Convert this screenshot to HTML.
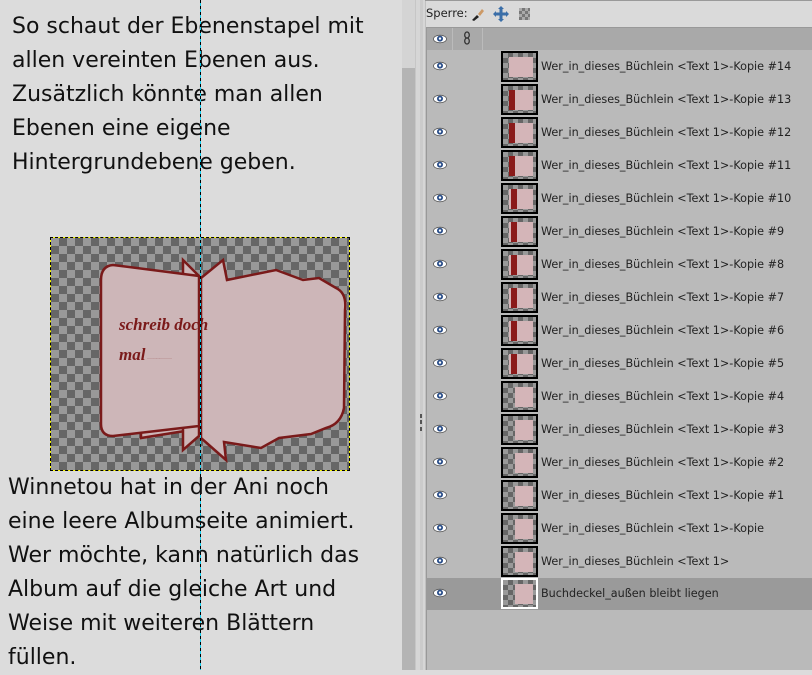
<!DOCTYPE html>
<html><head><meta charset="utf-8"><style>
*{margin:0;padding:0;box-sizing:border-box}
body{width:812px;height:670px;overflow:hidden;background:#dcdcdc;position:relative;font-family:"DejaVu Sans","Liberation Sans",sans-serif}
.txt{position:absolute;font-size:22px;line-height:34px;color:#111;white-space:nowrap}
.chk{background-color:#999;background-image:linear-gradient(45deg,#666 25%,transparent 25%,transparent 75%,#666 75%),linear-gradient(45deg,#666 25%,transparent 25%,transparent 75%,#666 75%);background-size:16px 16px;background-position:0 0,8px 8px}
.row{position:absolute;left:426px;width:386px;height:33px;font-size:11.2px;color:#222}
.row .eye{position:absolute;left:7px;top:11px}
.row .th{position:absolute;left:75px;top:1px;width:37px;height:31px;border:2px solid #000;background-size:10px 10px;background-position:0 0,5px 5px}
.row .th i{position:absolute;left:6px;top:4px;width:24px;height:20px;background:#d4b5b8}
.row .lbl{position:absolute;left:115px;top:10px;white-space:nowrap}
</style></head><body>
<div class="txt" style="left:12px;top:10px">So schaut der Ebenenstapel mit<br>allen vereinten Ebenen aus.<br>Zusätzlich könnte man allen<br>Ebenen eine eigene<br>Hintergrundebene geben.</div>
<div class="chk" style="position:absolute;left:51px;top:238px;width:298px;height:232px;outline:1px dashed #000;box-shadow:0 0 0 1px #ff0"></div>
<svg style="position:absolute;left:51px;top:238px" width="298" height="232">
<g fill="#cdb6b8" stroke="#7a1a1a" stroke-width="2.5">
<path d="M90 32 L140 40 L145 90 L140 192 L90 200 Z"/>
<path d="M132 22 L148 38 L148 198 L132 212 Z"/>
<path d="M62 27 Q50 28 50 42 L50 186 Q50 198 62 198 L148 188 L148 38 Z"/>
<path d="M150 40 L172 22 L176 42 L225 32 L252 42 L268 40 L285 50 Q296 55 294 72 L293 170 Q290 186 275 190 L260 196 L228 200 L210 210 L173 204 L175 222 L150 200 Z"/>
</g>
<text x="68" y="92" font-family="Liberation Serif,serif" font-style="italic" font-weight="bold" font-size="17" fill="#7a1a1a">schreib doch</text>
<text x="68" y="122" font-family="Liberation Serif,serif" font-style="italic" font-weight="bold" font-size="17" fill="#7a1a1a">mal</text>
<text x="96" y="121" font-size="3" fill="#7a1a1a">..........................</text>
</svg>
<div style="position:absolute;left:200px;top:0;width:1px;height:670px;background:repeating-linear-gradient(#000 0 3px,#1ce 3px 6px)"></div>
<div class="txt" style="left:8px;top:471px">Winnetou hat in der Ani noch<br>eine leere Albumseite animiert.<br>Wer möchte, kann natürlich das<br>Album auf die gleiche Art und<br>Weise mit weiteren Blättern<br>füllen.</div>
<div style="position:absolute;left:402px;top:0;width:13px;height:670px;background:#d4d4d4"></div>
<div style="position:absolute;left:402px;top:68px;width:13px;height:602px;background:#b4b4b4"></div>
<div style="position:absolute;left:415px;top:0;width:10px;height:670px;background:#d6d6d6;border-left:1px solid #c6c6c6"></div>
<div style="position:absolute;left:420px;top:0;width:3px;height:670px;background:#cbcbcb"></div>
<div style="position:absolute;left:420px;top:414px;width:2px;height:4px;background:#555"></div>
<div style="position:absolute;left:420px;top:420px;width:2px;height:4px;background:#555"></div>
<div style="position:absolute;left:420px;top:427px;width:2px;height:4px;background:#555"></div>
<div style="position:absolute;left:425px;top:0;width:387px;height:670px;background:#dadada;border-left:1px solid #c0c0c0"></div>
<div style="position:absolute;left:425px;top:0;width:387px;height:1px;background:#999"></div>
<div style="position:absolute;left:426px;top:6px;font-size:11.5px;color:#222">Sperre:</div>
<svg style="position:absolute;left:470px;top:6px" width="60" height="16">
<path d="M2 14 L7 9 L9 11 L4 15Z" fill="#222"/><path d="M8 8 L12 3 L14 5 L10 10Z" fill="#c96"/>
<path d="M25 8 h12 M31 2 v12" stroke="#3a6ea8" stroke-width="3"/><path d="M31 0 l3 3 h-6z M31 16 l3 -3 h-6z M23 8 l3 3 v-6z M39 8 l-3 3 v-6z" fill="#3a6ea8"/>
<rect x="49" y="2" width="12" height="12" fill="#777"/><path d="M49 2h3v3h-3zM55 2h3v3h-3zM52 5h3v3h-3zM58 5h3v3h-3zM49 8h3v3h-3zM55 8h3v3h-3zM52 11h3v3h-3zM58 11h3v3h-3z" fill="#aaa"/>
</svg>
<div style="position:absolute;left:426px;top:27px;width:386px;height:643px;background:#bababa;border-left:1px solid #999;border-top:1px solid #999"></div>
<div style="position:absolute;left:427px;top:28px;width:385px;height:22px;background:#a9a9a9"></div>
<div style="position:absolute;left:452px;top:28px;width:1px;height:22px;background:#bbb"></div>
<div style="position:absolute;left:482px;top:28px;width:1px;height:22px;background:#bbb"></div>
<svg style="position:absolute;left:433px;top:34px" width="14" height="10"><ellipse cx="7" cy="5" rx="6.5" ry="3.8" fill="#fff" stroke="#555" stroke-width=".8"/><circle cx="7" cy="4.6" r="3" fill="#2b4f8a"/><circle cx="7" cy="4.6" r="1.2" fill="#fff"/></svg>
<svg style="position:absolute;left:463px;top:31px" width="8" height="14"><ellipse cx="4" cy="4" rx="2.3" ry="3" fill="none" stroke="#333" stroke-width="1.3"/><ellipse cx="4" cy="10" rx="2.3" ry="3" fill="none" stroke="#333" stroke-width="1.3"/></svg>
<div style="position:absolute;left:426px;top:578px;width:386px;height:32px;background:#9a9a9a"></div>
<div id="rows"></div>
<script>
var labels=[];for(var i=14;i>=1;i--)labels.push("Wer_in_dieses_Büchlein &lt;Text 1&gt;-Kopie #"+i);
labels.push("Wer_in_dieses_Büchlein &lt;Text 1&gt;-Kopie");labels.push("Wer_in_dieses_Büchlein &lt;Text 1&gt;");labels.push("Buchdeckel_außen bleibt liegen");
var h="";var eye='<svg class="eye" width="14" height="10"><ellipse cx="7" cy="5" rx="6.5" ry="3.8" fill="#fff" stroke="#555" stroke-width=".8"/><circle cx="7" cy="4.6" r="3" fill="#2b4f8a"/><circle cx="7" cy="4.6" r="1.2" fill="#fff"/></svg>';
for(var k=0;k<labels.length;k++){var y=50+k*33-(k>=16?1:0);var last=k==16;
var red=(k>=1&&k<=9)?'<b style="position:absolute;left:'+(k<4?6:8)+'px;top:4px;width:6px;height:20px;background:#8a1a1a"></b>':'';
var inner=k==0?'<i style="left:6px;width:24px"></i>':(k>=10?'<i style="left:12px;width:18px"></i>':'<i></i>');
h+='<div class="row" style="top:'+y+'px">'+eye+'<div class="th chk" style="'+(last?'border-color:#fff;':'')+'">'+inner+red+'</div><div class="lbl">'+labels[k]+'</div></div>';}
document.getElementById("rows").innerHTML=h;
</script>
</body></html>
